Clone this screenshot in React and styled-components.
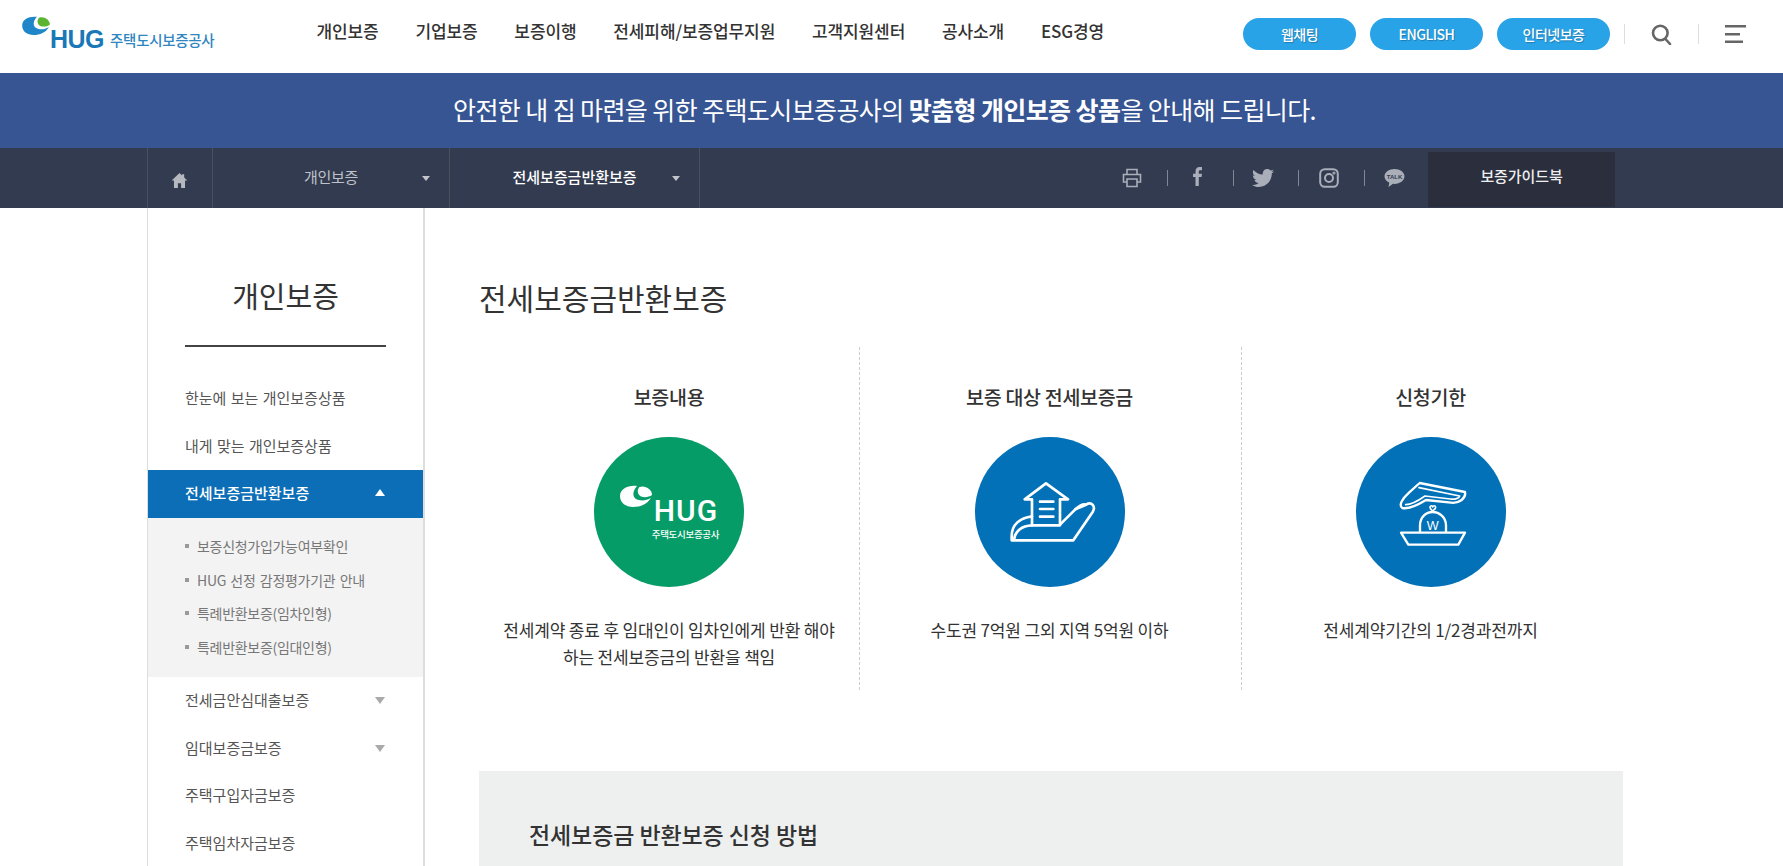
import React from 'react';
import styled, { createGlobalStyle } from 'styled-components';
import { FaTwitter } from 'react-icons/fa';

const FONT = `"Noto Sans CJK KR", "Noto Sans", sans-serif`;

const GlobalStyle = createGlobalStyle`
  html, body {
    margin: 0;
    background: #fff;
    font-family: ${FONT};
    color: #333;
  }
  * { box-sizing: border-box; }
  ul { list-style: none; margin: 0; padding: 0; }
`;

const Page = styled.div`
  height: 866px;
  overflow: hidden;
`;

const Header = styled.header`
  height: 73px;
  display: flex;
  align-items: flex-start;
  background: #fff;
`;

const LogoLink = styled.a`
  display: flex;
  align-items: flex-start;
  width: 316px;
  padding: 16px 0 0 22px;
  flex-shrink: 0;
`;

const LogoText = styled.span`
  font-family: "Liberation Sans", sans-serif;
  font-weight: 700;
  font-size: 25px;
  line-height: 1;
  letter-spacing: -0.5px;
  margin-top: 11px;
  color: #1a78b8;
`;

const LogoKor = styled.span`
  font-weight: 500;
  font-size: 14.5px;
  line-height: 16px;
  margin: 16px 0 0 6px;
  letter-spacing: -0.3px;
  color: #2f86c0;
`;

const TopNav = styled.ul`
  display: flex;
  gap: 36.75px;
  padding: 17px 0 0 0.5px;
`;

const TopNavItem = styled.li`
  font-size: 17px;
  font-weight: 500;
  line-height: 27px;
  letter-spacing: -0.1px;
  color: #333;
`;

const HeaderRight = styled.div`
  margin-left: auto;
  display: flex;
  align-items: center;
  height: 68px;
  padding-right: 37px;
`;

const Pill = styled.a`
  width: 113px;
  height: 32px;
  margin-right: 14px;
  border-radius: 16px;
  background: #29a3e8;
  color: #fff;
  font-size: 14px;
  font-weight: 500;
  letter-spacing: -0.5px;
  display: flex;
  align-items: center;
  justify-content: center;
  text-shadow: 1px 1px 1px rgba(0, 0, 0, 0.25);
`;

const HeaderDivider = styled.span`
  width: 1px;
  height: 20px;
  background: #ddd;
`;

const IconBtn = styled.span`
  width: ${p => p.$w}px;
  display: flex;
  justify-content: ${p => (p.$end ? 'flex-end' : 'center')};
  align-items: center;
`;

const Banner = styled.div`
  height: 75px;
  padding-right: 14px;
  background: #365592;
  color: #fff;
  font-size: 25px;
  line-height: 73px;
  text-align: center;
  letter-spacing: -0.6px;
  strong { font-weight: 700; }
`;

const LocationBar = styled.div`
  height: 60px;
  background: #333b50;
`;

const Inner = styled.div`
  width: 1489px;
  margin: 0 auto;
  display: flex;
`;

const Crumb = styled.div`
  height: 60px;
  width: ${p => p.$w}px;
  border-left: 1px solid #4a505f;
  display: flex;
  align-items: center;
  justify-content: center;
  position: relative;
  font-size: 15px;
  letter-spacing: ${p => (p.$on ? '0' : '-0.3px')};
  font-weight: ${p => (p.$on ? 500 : 400)};
  color: ${p => (p.$on ? '#fff' : '#bfc2c9')};
  padding: ${p => (p.$home ? '4px 2px 0 0' : '0 0 4px')};
`;

const CrumbCaret = styled.i`
  position: absolute;
  right: 19px;
  top: 28px;
  border-left: 4.5px solid transparent;
  border-right: 4.5px solid transparent;
  border-top: 5px solid #c3c5cb;
`;

const CrumbEnd = styled.div`
  width: 1px;
  background: #4a505f;
`;

const Social = styled.div`
  margin-left: auto;
  display: flex;
  align-items: center;
  gap: 14.25px;
  height: 60px;
  color: #a9aeb8;
`;

const SocialIcon = styled.span`
  width: 36px;
  display: flex;
  justify-content: center;
  align-items: center;
  margin-top: ${p => (p.$raise ? '-3px' : '0')};
`;

const SocialSep = styled.span`
  width: 1px;
  height: 16px;
  margin: 0 -3px 0 3px;
  background: #7f8797;
`;

const Guide = styled.a`
  width: 187px;
  height: 55px;
  margin: 4px 21px 0 16px;
  background: #2a2e3d;
  color: #eee;
  font-size: 15px;
  font-weight: 500;
  letter-spacing: -0.1px;
  display: flex;
  justify-content: center;
  align-items: center;
  padding-bottom: 8px;
`;

const Body = styled.div`
  width: 1489px;
  margin: 0 auto;
  display: flex;
  align-items: flex-start;
`;

const Side = styled.aside`
  width: 278px;
  height: 658px;
  flex-shrink: 0;
  border-left: 1px solid #ddd;
  border-right: 2px solid #ddd;
`;

const SideTitle = styled.h2`
  margin: 0 37px;
  height: 139px;
  padding-top: 63px;
  border-bottom: 2px solid #444;
  font-size: 29px;
  line-height: 48px;
  font-weight: 400;
  text-align: center;
  color: #333;
`;

const SideList = styled.ul`
  margin-top: 27.5px;
`;

const SideItem = styled.li`
  height: 47.7px;
  padding: 0 38px 2px 37px;
  display: flex;
  align-items: center;
  justify-content: space-between;
  font-size: 15px;
  word-spacing: 1px;
  font-weight: ${p => (p.$on ? 500 : 400)};
  background: ${p => (p.$on ? '#0c6eb6' : 'transparent')};
  color: ${p => (p.$on ? '#fff' : '#555')};
`;

const Arrow = styled.i`
  border-left: 5px solid transparent;
  border-right: 5px solid transparent;
  ${p => (p.$up
    ? 'border-bottom: 7px solid #fff;'
    : 'border-top: 7px solid #aaa; margin-top: 3px;')}
`;

const SubList = styled.ul`
  background: #f3f3f3;
  padding: 12px 0 13px 37px;
`;

const SubItem = styled.li`
  height: 33.5px;
  display: flex;
  align-items: center;
  gap: 8px;
  font-size: 14px;
  letter-spacing: -0.3px;
  word-spacing: 1.5px;
  color: #777;
  &::before {
    content: '';
    width: 4px;
    height: 4px;
    background: #999;
  }
`;

const Main = styled.main`
  flex: 1;
  padding: 0 13px 0 54px;
`;

const PageTitle = styled.h1`
  margin: 0;
  padding-top: 66px;
  font-size: 30px;
  line-height: 46px;
  font-weight: 400;
  color: #333;
`;

const Cols = styled.div`
  margin-top: 27px;
  display: grid;
  grid-template-columns: 380px 382px 380px;
`;

const Col = styled.div`
  height: 343px;
  padding: 36px ${p => (p.$line ? '2px' : '0')} 0 0;
  display: flex;
  flex-direction: column;
  align-items: center;
  border-left: ${p => (p.$line ? '1px dashed #ccc' : '0')};
`;

const ColTitle = styled.h3`
  margin: 0;
  font-size: 19.5px;
  line-height: 28px;
  font-weight: 500;
  letter-spacing: -0.3px;
  color: #333;
`;

const Circle = styled.div`
  width: 150px;
  height: 150px;
  margin-top: 26px;
  border-radius: 50%;
  background: ${p => p.$color};
  display: flex;
  flex-direction: column;
  align-items: center;
  justify-content: center;
`;

const ColText = styled.p`
  margin: 28.5px 0 0;
  font-size: 17px;
  line-height: 27px;
  letter-spacing: -0.16px;
  text-align: center;
  color: #333;
`;

const MarkRow = styled.div`
  display: flex;
  align-items: flex-start;
`;

const MarkHug = styled.span`
  font-family: Roboto, sans-serif;
  font-weight: 500;
  font-size: 30px;
  line-height: 1;
  letter-spacing: 1px;
  margin: 11px 0 0 2px;
  color: #fff;
`;

const MarkKor = styled.span`
  font-size: 9.5px;
  line-height: 12px;
  font-weight: 500;
  letter-spacing: -0.3px;
  color: #fff;
  margin: 2px 0 0 33px;
`;

const HowTo = styled.section`
  margin-top: 81px;
  height: 96px;
  background: #eef0f0;
  padding: 46px 50px 0;
`;

const HowToTitle = styled.h3`
  margin: 0;
  font-size: 23px;
  line-height: 34px;
  font-weight: 500;
  letter-spacing: -0.1px;
  color: #333;
`;

const Swoosh = ({ w, h, blue, green }) => (
  <svg width={w} height={h} viewBox="0 0 32 22">
    <path d="M17 1C8 0 0 4 0 11c0 7 6 11 13 11 8 0 14-3 18-9-4 2-8 3-12 2-6-1-8-7-2-14z" fill={blue} />
    <path d="M19.500 2C25 0 32 4 32 10c-3 2-7 3-11 1.500-4-2-4-7-1.500-9.500z" fill={green} />
  </svg>
);

const HouseHand = () => (
  <svg width="150" height="150" viewBox="75 47 450 450" fill="none" stroke="#fff" strokeWidth="8" strokeLinejoin="round" strokeLinecap="round">
    <path d="M288 186 L354 234 H330 V312 H246 V234 H224 Z" />
    <path d="M270 241 H310 M270 263 H310 M270 286 H310" />
    <path d="M246 285 C210 290 185 310 185 345 V357 H370 L428 272 C438 255 425 240 408 250 L376 264 L330 310" />
    <path d="M192 355 C195 330 215 313 246 312" />
    <path d="M376 264 C392 250 402 247 408 250" />
  </svg>
);

const HandCoin = () => (
  <svg width="150" height="150" viewBox="75 47 450 450" fill="none" stroke="#fff" strokeLinejoin="round" strokeLinecap="round">
    <g strokeWidth="7">
      <path d="M266 185 L402 212 C406 230 385 247 360 244 L285 236 C262 250 232 264 214 260 C202 252 214 232 234 214 Z" />
      <path d="M264 199 L386 224 C384 231 372 235 358 233 L282 224 C262 238 238 250 224 250" strokeWidth="5" />
      <path d="M267 332 V312 C267 288 285 272 305 272 C325 272 345 288 345 312 V332" />
      <path d="M210 334 H402 L382 370 H232 Z" />
    </g>
    <path d="M297 258 C297 252 305 252 305 257 C305 252 314 252 314 258 C314 263 308 266 305 269 C302 266 297 263 297 258 Z" strokeWidth="5" />
    <text x="305" y="325" textAnchor="middle" fontSize="38" fontFamily="Liberation Sans, sans-serif" fill="#fff" stroke="none">W</text>
  </svg>
);

const Home = () => (
  <svg width="17" height="17" viewBox="0 0 16 16" fill="#b5b8bf">
    <path d="M8 1 .6 8h2.200v7h3.700v-4.500h3v4.500h3.700V8h2.200l-3-2.800V2h-2v1.400z" />
  </svg>
);

const Printer = () => (
  <svg width="20" height="20" viewBox="0 0 20 20" fill="none" stroke="#a9aeb8" strokeWidth="1.600">
    <path d="M5 6.500V1.500h10v5M5 14H1.500V6.500h17V14H15" />
    <path d="M5 11h10v7.500H5z" />
  </svg>
);

const FacebookF = () => (
  <svg width="9" height="19" viewBox="0 0 9 19" fill="#a9aeb8">
    <path d="M2.500 19V10H0V6.800h2.500V4.500C2.500 1.500 4 0 6.500 0H9v3.200H7.300c-1.100 0-1.500.5-1.500 1.500v2.100H9L8.600 10H5.800v9z" />
  </svg>
);

const Insta = () => (
  <svg width="20" height="20" viewBox="0 0 20 20" fill="none" stroke="#a9aeb8" strokeWidth="2">
    <rect x="1.200" y="1.200" width="17.600" height="17.600" rx="4.500" />
    <circle cx="10" cy="10" r="4" />
    <circle cx="15" cy="5" r=".6" />
  </svg>
);

const Talk = () => (
  <svg width="21" height="20" viewBox="0 0 21 20">
    <path d="M10.500 1C5 1 .5 4.200.5 8.300c0 2.700 1.900 5 4.800 6.300L4.500 19l4.500-3.200c.5 0 1 .1 1.500.1 5.500 0 10-3.400 10-7.600S16 1 10.500 1z" fill="#a9aeb8" />
    <text x="10.500" y="11" textAnchor="middle" fontSize="6" fontWeight="700" fontFamily="Liberation Sans, sans-serif" fill="#333b50">TALK</text>
  </svg>
);

const Search = () => (
  <svg width="21" height="21" viewBox="0 0 21 21" fill="none" stroke="#666" strokeWidth="2.600" strokeLinecap="round">
    <circle cx="9.300" cy="9" r="7.300" />
    <path d="M14.500 15 19 20" />
  </svg>
);

const Menu = () => (
  <svg width="21" height="19" viewBox="0 0 21 19" fill="#666">
    <rect x="0" y="0" width="21" height="2.500" />
    <rect x="0" y="8" width="15" height="2.500" />
    <rect x="0" y="15.500" width="18" height="2.500" />
  </svg>
);

const topMenus = ['개인보증', '기업보증', '보증이행', '전세피해/보증업무지원', '고객지원센터', '공사소개', 'ESG경영'];
const subMenus = ['보증신청가입가능여부확인', 'HUG 선정 감정평가기관 안내', '특례반환보증(임차인형)', '특례반환보증(임대인형)'];

const App = () => {
  return (
    <Page>
      <GlobalStyle />
      <Header>
        <LogoLink>
          <Swoosh w={28} h={19} blue="#1f87c9" green="#5cb531" />
          <LogoText>HUG</LogoText>
          <LogoKor>주택도시보증공사</LogoKor>
        </LogoLink>
        <TopNav>
          {topMenus.map(m => <TopNavItem key={m}>{m}</TopNavItem>)}
        </TopNav>
        <HeaderRight>
          <Pill>웹채팅</Pill>
          <Pill>ENGLISH</Pill>
          <Pill>인터넷보증</Pill>
          <HeaderDivider />
          <IconBtn $w={73}><Search /></IconBtn>
          <HeaderDivider />
          <IconBtn $w={47} $end><Menu /></IconBtn>
        </HeaderRight>
      </Header>

      <Banner>
        안전한 내 집 마련을 위한 주택도시보증공사의 <strong>맞춤형 개인보증 상품</strong>을 안내해 드립니다.
      </Banner>

      <LocationBar>
        <Inner>
          <Crumb $w={65} $home><Home /></Crumb>
          <Crumb $w={237}>개인보증<CrumbCaret /></Crumb>
          <Crumb $w={250} $on>전세보증금반환보증<CrumbCaret /></Crumb>
          <CrumbEnd />
          <Social>
            <SocialIcon><Printer /></SocialIcon>
            <SocialSep />
            <SocialIcon $raise><FacebookF /></SocialIcon>
            <SocialSep />
            <SocialIcon><FaTwitter size={22} /></SocialIcon>
            <SocialSep />
            <SocialIcon><Insta /></SocialIcon>
            <SocialSep />
            <SocialIcon><Talk /></SocialIcon>
          </Social>
          <Guide>보증가이드북</Guide>
        </Inner>
      </LocationBar>

      <Body>
        <Side>
          <SideTitle>개인보증</SideTitle>
          <SideList>
            <SideItem>한눈에 보는 개인보증상품</SideItem>
            <SideItem>내게 맞는 개인보증상품</SideItem>
            <SideItem $on>전세보증금반환보증<Arrow $up /></SideItem>
            <SubList>
              {subMenus.map(s => <SubItem key={s}>{s}</SubItem>)}
            </SubList>
            <SideItem>전세금안심대출보증<Arrow /></SideItem>
            <SideItem>임대보증금보증<Arrow /></SideItem>
            <SideItem>주택구입자금보증</SideItem>
            <SideItem>주택임차자금보증</SideItem>
          </SideList>
        </Side>

        <Main>
          <PageTitle>전세보증금반환보증</PageTitle>
          <Cols>
            <Col>
              <ColTitle>보증내용</ColTitle>
              <Circle $color="#069c68">
                <MarkRow>
                  <Swoosh w={32} h={22} blue="#fff" green="#fff" />
                  <MarkHug>HUG</MarkHug>
                </MarkRow>
                <MarkKor>주택도시보증공사</MarkKor>
              </Circle>
              <ColText>전세계약 종료 후 임대인이 임차인에게 반환 해야<br />하는 전세보증금의 반환을 책임</ColText>
            </Col>
            <Col $line>
              <ColTitle>보증 대상 전세보증금</ColTitle>
              <Circle $color="#0271b7"><HouseHand /></Circle>
              <ColText>수도권 7억원 그외 지역 5억원 이하</ColText>
            </Col>
            <Col $line>
              <ColTitle>신청기한</ColTitle>
              <Circle $color="#0271b7"><HandCoin /></Circle>
              <ColText>전세계약기간의 1/2경과전까지</ColText>
            </Col>
          </Cols>
          <HowTo>
            <HowToTitle>전세보증금 반환보증 신청 방법</HowToTitle>
          </HowTo>
        </Main>
      </Body>
    </Page>
  );
};

export default App;
